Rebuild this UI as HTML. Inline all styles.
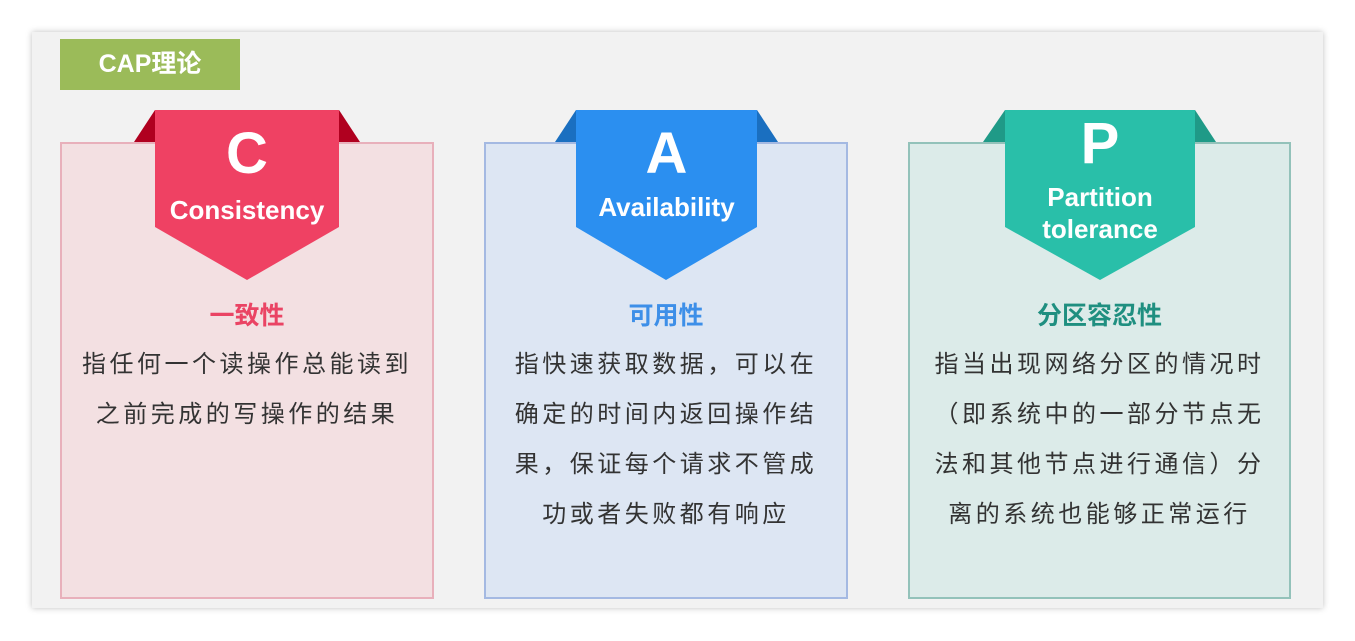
<!DOCTYPE html>
<html><head><meta charset="utf-8"><style>
*{margin:0;padding:0;box-sizing:border-box}
body{width:1355px;height:641px;background:#fff;position:relative;overflow:hidden;font-family:"Liberation Sans","Noto Sans CJK SC",sans-serif}
.panel{position:absolute;left:32px;top:32px;width:1291px;height:576px;background:#f2f2f2;box-shadow:0 0 6px rgba(0,0,0,.25)}
.tag{position:absolute;left:60px;top:39px;width:180px;height:51px;background:#9bbb59;color:#fff;font-weight:bold;font-size:25px;line-height:51px;text-align:center}
.card{position:absolute;top:142px;height:457px;border:2px solid}
.t{position:absolute;left:0;right:0;text-align:center;font-weight:bold;font-size:25px;top:152px}
.b{position:absolute;left:0;right:0;text-align:center;font-size:24px;letter-spacing:3.5px;color:#333;line-height:50px;top:196px}
svg{position:absolute;left:0;top:0}
.rl{position:absolute;color:#fff;font-weight:bold;text-align:center}
</style></head><body>
<div class="panel"></div>
<div class="tag">CAP理论</div>

<div class="card" style="left:60px;width:374px;background:#f3e0e2;border-color:#e8b0bb">
 <div class="t" style="color:#ea4464">一致性</div>
 <div class="b">指任何一个读操作总能读到<br>之前完成的写操作的结果</div>
</div>
<div class="card" style="left:484px;width:364px;background:#dde6f3;border-color:#a4b9e2">
 <div class="t" style="color:#3d8fe8">可用性</div>
 <div class="b">指快速获取数据，可以在<br>确定的时间内返回操作结<br>果，保证每个请求不管成<br>功或者失败都有响应</div>
</div>
<div class="card" style="left:908px;width:383px;background:#dcebe9;border-color:#93c2ba">
 <div class="t" style="color:#1f8f80">分区容忍性</div>
 <div class="b">指当出现网络分区的情况时<br>（即系统中的一部分节点无<br>法和其他节点进行通信）分<br>离的系统也能够正常运行</div>
</div>

<svg width="1355" height="641">
 <polygon points="134,142 155,110 155,142" fill="#b0001f"/>
 <polygon points="360,142 339,110 339,142" fill="#b0001f"/>
 <polygon points="155,110 339,110 339,227 247,280 155,227" fill="#ef4163"/>
 <polygon points="555,142 576,110 576,142" fill="#1a6fc0"/>
 <polygon points="778,142 757,110 757,142" fill="#1a6fc0"/>
 <polygon points="576,110 757,110 757,227 666,280 576,227" fill="#2b8ff0"/>
 <polygon points="983,142 1005,110 1005,142" fill="#1f9a87"/>
 <polygon points="1216,142 1195,110 1195,142" fill="#1f9a87"/>
 <polygon points="1005,110 1195,110 1195,227 1100,280 1005,227" fill="#29bfa9"/>
</svg>
<div class="rl" style="left:155px;width:184px;top:122px;font-size:58px;line-height:64px">C</div>
<div class="rl" style="left:155px;width:184px;top:194px;font-size:26px;line-height:32px">Consistency</div>
<div class="rl" style="left:576px;width:181px;top:122px;font-size:58px;line-height:64px">A</div>
<div class="rl" style="left:576px;width:181px;top:191px;font-size:26px;line-height:32px">Availability</div>
<div class="rl" style="left:1005px;width:190px;top:112px;font-size:58px;line-height:64px">P</div>
<div class="rl" style="left:1005px;width:190px;top:181px;font-size:26px;line-height:32px">Partition<br>tolerance</div>
</body></html>
